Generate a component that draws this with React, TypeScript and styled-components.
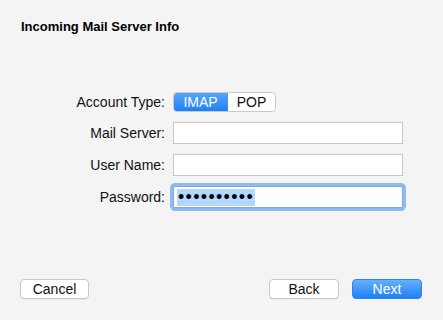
import React from "react";
import styled, { createGlobalStyle } from "styled-components";

const Global = createGlobalStyle`
  html, body { margin: 0; padding: 0; background: #f4f4f4; }
  body { font-family: "Liberation Sans", Arial, sans-serif; }
`;

const Window = styled.div`
  width: 443px;
  height: 320px;
  box-sizing: border-box;
  padding: 18px 21px 21px 20px;
  background: #f4f4f4;
  border-top: 1px solid #f8f8f8;
  display: flex;
  flex-direction: column;
  color: #111;
`;

const Title = styled.h1`
  margin: 0 0 0 1px;
  font-size: 13px;
  line-height: 16px;
  font-weight: bold;
  color: #000;
`;

const Form = styled.div`
  margin-top: 57px;
  display: grid;
  grid-template-columns: 145px 230px;
  column-gap: 8px;
  row-gap: 10px;
  align-items: center;
`;

const Label = styled.label`
  font-size: 14px;
  line-height: 16px;
  text-align: right;
  color: #111;
`;

const Segmented = styled.div`
  display: flex;
  height: 20px;
  width: 103px;
  box-sizing: border-box;
  border-radius: 4px;
  overflow: hidden;
  border: 1px solid #c9c9c9;
  background: #fff;
`;

const Segment = styled.div<{ $active?: boolean }>`
  flex: ${(p) => (p.$active ? "0 0 55px" : "1")};
  display: flex;
  align-items: center;
  justify-content: center;
  font-size: 14px;
  color: ${(p) => (p.$active ? "#fff" : "#111")};
  background: ${(p) =>
    p.$active ? "linear-gradient(#5aa8fb, #1b7ef6)" : "#fff"};
  margin: ${(p) => (p.$active ? "-1px 0 -1px -1px" : "0")};
`;

const Field = styled.div<{ $focused?: boolean }>`
  height: 22px;
  box-sizing: border-box;
  background: #fff;
  border: 1px solid ${(p) => (p.$focused ? "#7fa9e0" : "#c6c6c6")};
  box-shadow: ${(p) =>
    p.$focused ? "0 0 0 3px rgba(110, 168, 242, 0.75)" : "none"};
  border-radius: ${(p) => (p.$focused ? "2px" : "0")};
  display: flex;
  align-items: center;
  padding-left: 3px;
`;

const Selected = styled.span`
  background: #b3d7ff;
  height: 17px;
  display: inline-flex;
  align-items: center;
  padding: 0 1px 0 1px;
  font-size: 18px;
  letter-spacing: 1.3px;
  color: #000;
  line-height: 17px;
`;

const Footer = styled.div`
  margin-top: auto;
  display: flex;
  align-items: center;
  gap: 13px;
`;

const Spacer = styled.div`
  flex: 1;
`;

const Button = styled.button<{ $primary?: boolean; $w: number }>`
  width: ${(p) => p.$w}px;
  height: 20px;
  box-sizing: border-box;
  border-radius: 4px;
  font-family: "Liberation Sans", Arial, sans-serif;
  font-size: 14px;
  line-height: 16px;
  padding: 0;
  border: 1px solid ${(p) => (p.$primary ? "#2b86f5" : "#c8c8c8")};
  color: ${(p) => (p.$primary ? "#fff" : "#111")};
  background: ${(p) =>
    p.$primary ? "linear-gradient(#66b0fc, #1e80f6)" : "#fff"};
  box-shadow: ${(p) => (p.$primary ? "none" : "0 1px 0 rgba(0,0,0,0.04)")};
`;

export default function App() {
  return (
    <>
      <Global />
      <Window>
        <Title>Incoming Mail Server Info</Title>
        <Form>
          <Label>Account Type:</Label>
          <Segmented>
            <Segment $active>IMAP</Segment>
            <Segment>POP</Segment>
          </Segmented>
          <Label>Mail Server:</Label>
          <Field />
          <Label>User Name:</Label>
          <Field />
          <Label>Password:</Label>
          <Field $focused>
            <Selected>••••••••••</Selected>
          </Field>
        </Form>
        <Footer>
          <Button $w={69}>Cancel</Button>
          <Spacer />
          <Button $w={70}>Back</Button>
          <Button $w={70} $primary>
            Next
          </Button>
        </Footer>
      </Window>
    </>
  );
}
